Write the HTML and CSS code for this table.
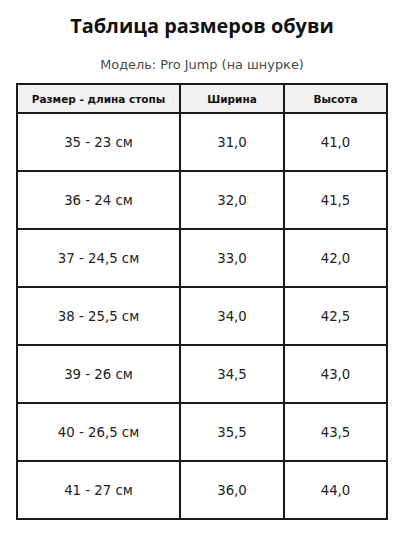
FILE: index.html
```html
<!DOCTYPE html>
<html lang="ru">
<head>
<meta charset="utf-8">
<link rel="stylesheet" href="styles.css">
</head>
<body>
<div class="page">
  <h1 class="title">Таблица размеров обуви</h1>
  <p class="subtitle">Модель: Pro Jump (на шнурке)</p>
  <table class="sizes">
    <colgroup><col class="c1"><col class="c2"><col class="c3"></colgroup>
    <thead>
      <tr class="head"><th>Размер - длина стопы</th><th>Ширина</th><th>Высота</th></tr>
    </thead>
    <tbody>
      <tr><td>35 - 23 см</td><td>31,0</td><td>41,0</td></tr>
      <tr><td>36 - 24 см</td><td>32,0</td><td>41,5</td></tr>
      <tr><td>37 - 24,5 см</td><td>33,0</td><td>42,0</td></tr>
      <tr><td>38 - 25,5 см</td><td>34,0</td><td>42,5</td></tr>
      <tr><td>39 - 26 см</td><td>34,5</td><td>43,0</td></tr>
      <tr><td>40 - 26,5 см</td><td>35,5</td><td>43,5</td></tr>
      <tr><td>41 - 27 см</td><td>36,0</td><td>44,0</td></tr>
    </tbody>
  </table>
</div>
</body>
</html>
```
FILE: styles.css
```css
html, body {
  margin: 0;
  padding: 0;
  background: #ffffff;
}
.page {
  width: 404px;
  height: 537px;
  font-family: "DejaVu Sans", "Noto Sans", sans-serif;
  color: #1f1f1f;
  display: flex;
  flex-direction: column;
  align-items: center;
}
.title {
  margin: 12px 0 0 0;
  font-family: "Open Sans", "DejaVu Sans", sans-serif;
  font-size: 19.9px;
  line-height: 28px;
  font-weight: 700;
  color: #111;
}
.subtitle {
  margin: 17px 0 0 0;
  font-size: 12.9px;
  line-height: 16px;
  color: #4a4a4a;
}
.sizes {
  margin-top: 10px;
  border-collapse: collapse;
  width: 370px;
  table-layout: fixed;
  border: 2px solid #1a1a1a;
}
.c1 { width: 163px; }
.c2 { width: 104px; }
.c3 { width: 103px; }
.sizes th, .sizes td {
  border: 2px solid #1a1a1a;
  text-align: center;
  padding: 0;
}
.sizes th {
  background: #f1f1f1;
  font-size: 10.5px;
  font-weight: 700;
  height: 27px;
  color: #111;
}
.sizes td {
  font-size: 13.3px;
  height: 56px;
  color: #222;
}
```
